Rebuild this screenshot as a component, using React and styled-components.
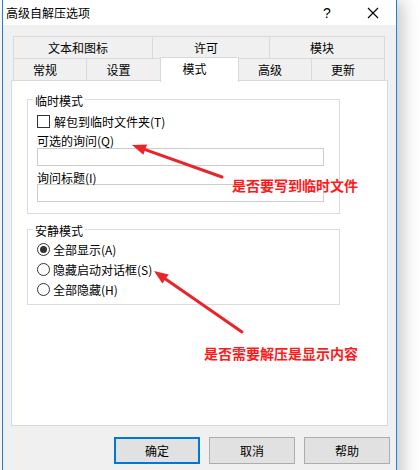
import styled, { createGlobalStyle } from 'styled-components';

const GlobalStyle = createGlobalStyle`
  body {
    margin: 0;
    background: #ffffff;
    font-family: "Noto Sans CJK SC", "Noto Sans", sans-serif;
    font-size: 12px;
    color: #000;
  }
`;

const Screen = styled.div`
  position: relative;
  width: 420px;
  height: 470px;
  overflow: hidden;
  background: #ffffff;
`;

const Window = styled.div`
  margin-left: 2px;
  width: 393px;
  height: 490px;
  border-left: 1px solid #1883d7;
  border-right: 1px solid #1883d7;
  background: #f0f0f0;
  box-shadow: 6px 0 16px rgba(0, 0, 0, 0.22);
`;

const TitleBar = styled.div`
  display: flex;
  align-items: center;
  height: 25px;
  background: #ffffff;
  padding-left: 3px;
`;

const Title = styled.div`
  flex: 1;
  font-size: 12px;
  line-height: 25px;
`;

const TitleButton = styled.div`
  display: flex;
  align-items: center;
  justify-content: center;
  width: 46px;
  height: 25px;
  font-family: "Liberation Sans", sans-serif;
  font-size: 14px;
`;

const Body = styled.div`
  padding: 11px 8px 0 8px;
`;

const TabRow = styled.div`
  display: flex;
  align-items: flex-start;
  height: 22px;
  margin-left: 2px;
`;

const Tab = styled.div`
  box-sizing: border-box;
  width: ${p => p.$w}px;
  height: ${p => (p.$active ? 25 : 22)}px;
  margin-top: ${p => (p.$active ? -1 : 0)}px;
  margin-left: -1px;
  &:first-child { margin-left: 0; }
  border: 1px solid #d9d9d9;
  border-bottom: none;
  background: ${p => (p.$active ? '#ffffff' : '#f0f0f0')};
  z-index: ${p => (p.$active ? 1 : 0)};
  display: flex;
  align-items: center;
  justify-content: center;
  padding-right: 10px;
  padding-bottom: ${p => (p.$active ? 3 : 0)}px;
  font-size: 12px;
  white-space: nowrap;
`;

const Panel = styled.div`
  box-sizing: border-box;
  width: 377px;
  height: 346px;
  background: #ffffff;
  border: 1px solid #d9d9d9;
  padding: 9px 0 0 15px;
`;

const Group = styled.fieldset`
  box-sizing: border-box;
  width: 313px;
  margin: ${p => (p.$first ? 0 : 6)}px 0 0 0;
  padding: 0 9px ${p => p.$pb}px 9px;
  border: 1px solid #dcdcdc;
  min-width: 0;
`;

const Legend = styled.legend`
  padding: 4px 2px 0 2px;
  margin-left: -4px;
  font-size: 12px;
  line-height: 14px;
`;

const CheckRow = styled.label`
  display: flex;
  align-items: center;
  gap: 4px;
  height: 16px;
  margin-top: 5px;
  font-size: 12px;
`;

const CheckBox = styled.span`
  box-sizing: border-box;
  width: 13px;
  height: 13px;
  border: 1px solid #333333;
  background: #ffffff;
`;

const FieldLabel = styled.div`
  padding-top: 5px;
  line-height: ${p => p.$lh}px;
  font-size: 12px;
`;

const TextInput = styled.div`
  box-sizing: border-box;
  width: 287px;
  height: 18px;
  border: 1px solid #cccccc;
  background: #ffffff;
`;

const RadioRow = styled.label`
  display: flex;
  align-items: center;
  gap: 3px;
  height: 20px;
  font-size: 12px;
  &:first-of-type { margin-top: 1px; }
`;

const Radio = styled.span`
  box-sizing: border-box;
  width: 13px;
  height: 13px;
  border-radius: 50%;
  border: 1px solid #333333;
  background: #ffffff;
  display: flex;
  align-items: center;
  justify-content: center;
  &::after {
    content: '';
    width: 7px;
    height: 7px;
    border-radius: 50%;
    background: ${p => (p.$checked ? '#333333' : 'transparent')};
  }
`;

const ButtonRow = styled.div`
  display: flex;
  justify-content: flex-end;
  gap: 9px;
  margin: 11px -2px 0 0;
`;

const Button = styled.div`
  box-sizing: border-box;
  width: 86px;
  height: 27px;
  display: flex;
  align-items: center;
  justify-content: center;
  background: #e1e1e1;
  border: ${p => (p.$default ? '2px solid #0078d7' : '1px solid #adadad')};
  font-size: 12px;
`;

const Overlay = styled.svg`
  position: absolute;
  left: 0;
  top: 0;
  pointer-events: none;
`;

const Note = styled.div`
  position: absolute;
  left: ${p => p.$x}px;
  top: ${p => p.$y}px;
  color: #ff1a1a;
  font-weight: bold;
  font-size: 14px;
  line-height: 18px;
  white-space: nowrap;
`;

const Arrow = ({ x1, y1, x2, y2 }) => {
  const ang = Math.atan2(y1 - y2, x1 - x2);
  const len = 14;
  const half = 5.5;
  const bx = x2 + Math.cos(ang) * len;
  const by = y2 + Math.sin(ang) * len;
  const px = -Math.sin(ang) * half;
  const py = Math.cos(ang) * half;
  return (
    <g fill="#e8262a" stroke="#e8262a">
      <line x1={x1} y1={y1} x2={bx} y2={by} strokeWidth="3" strokeLinecap="round" />
      <polygon points={`${x2},${y2} ${bx + px},${by + py} ${bx - px},${by - py}`} stroke="none" />
    </g>
  );
};

const row1 = [
  { label: '文本和图标', w: 140 },
  { label: '许可', w: 118 },
  { label: '模块', w: 116 },
];

const row2 = [
  { label: '常规', w: 74 },
  { label: '设置', w: 75 },
  { label: '模式', w: 79, active: true },
  { label: '高级', w: 74 },
  { label: '更新', w: 74 },
];

export default function App() {
  return (
    <Screen>
      <GlobalStyle />
      <Window>
        <TitleBar>
          <Title>高级自解压选项</Title>
          <TitleButton>?</TitleButton>
          <TitleButton>
            <svg width="12" height="12" viewBox="0 0 12 12">
              <path d="M1 1 L11 11 M11 1 L1 11" stroke="#000" strokeWidth="1.1" fill="none" />
            </svg>
          </TitleButton>
        </TitleBar>
        <Body>
          <TabRow>
            {row1.map(t => (
              <Tab key={t.label} $w={t.w}>{t.label}</Tab>
            ))}
          </TabRow>
          <TabRow>
            {row2.map(t => (
              <Tab key={t.label} $w={t.w} $active={t.active}>{t.label}</Tab>
            ))}
          </TabRow>
          <Panel>
            <Group $first $pb={11}>
              <Legend>临时模式</Legend>
              <CheckRow>
                <CheckBox />
                解包到临时文件夹(T)
              </CheckRow>
              <FieldLabel $lh={14}>可选的询问(Q)</FieldLabel>
              <TextInput />
              <FieldLabel $lh={13}>询问标题(I)</FieldLabel>
              <TextInput />
            </Group>
            <Group $pb={5}>
              <Legend>安静模式</Legend>
              <RadioRow>
                <Radio $checked />
                全部显示(A)
              </RadioRow>
              <RadioRow>
                <Radio />
                隐藏启动对话框(S)
              </RadioRow>
              <RadioRow>
                <Radio />
                全部隐藏(H)
              </RadioRow>
            </Group>
          </Panel>
          <ButtonRow>
            <Button $default>确定</Button>
            <Button>取消</Button>
            <Button>帮助</Button>
          </ButtonRow>
        </Body>
      </Window>
      <Overlay width="420" height="470">
        <Arrow x1={222} y1={177} x2={132} y2={145} />
        <Arrow x1={242} y1={332} x2={154} y2={271} />
      </Overlay>
      <Note $x={232} $y={176}>是否要写到临时文件</Note>
      <Note $x={204} $y={344}>是否需要解压是显示内容</Note>
    </Screen>
  );
}
